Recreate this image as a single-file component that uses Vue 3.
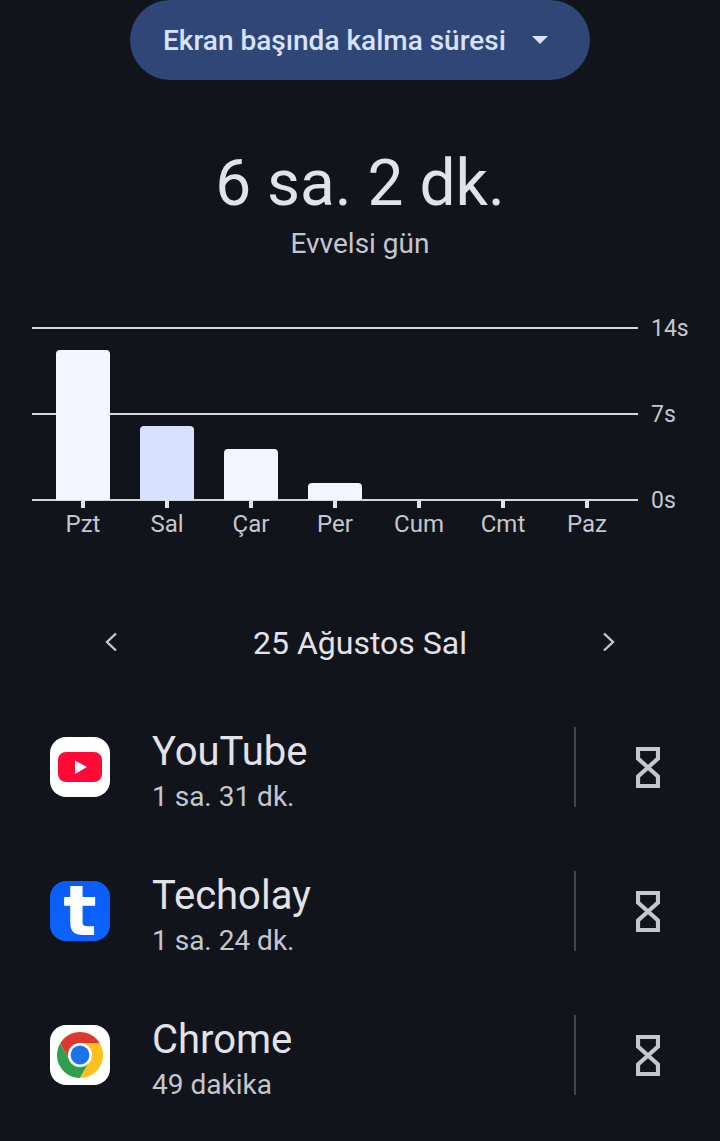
<template>
  <div class="screen">
    <div class="header">
      <button class="picker">
        <span>Ekran başında kalma süresi</span>
        <i class="caret"></i>
      </button>
    </div>

    <div class="total">6 sa. 2 dk.</div>
    <div class="period">Evvelsi gün</div>

    <div class="chart">
      <div class="plot">
        <div class="lines">
          <div class="line"></div>
          <div class="line"></div>
          <div class="line"></div>
        </div>
        <div class="bars">
          <div class="slot" v-for="d in days" :key="d.name">
            <div v-if="d.h" class="bar" :class="{ selected: d.selected }" :style="{ height: d.h + 'px' }"></div>
          </div>
        </div>
      </div>
      <div class="axis">
        <span>14s</span>
        <span>7s</span>
        <span>0s</span>
      </div>
      <div class="labels">
        <div class="day" v-for="d in days" :key="d.name">
          <i class="tick"></i>
          <span>{{ d.name }}</span>
        </div>
      </div>
    </div>

    <div class="date-nav">
      <svg width="14" height="20" viewBox="0 0 14 20"><path d="M12 1.500 3 10l9 8.500" fill="none" stroke="#c4c6d0" stroke-width="2.400"/></svg>
      <span class="date">25 Ağustos Sal</span>
      <svg width="14" height="20" viewBox="0 0 14 20"><path d="M2 1.500 11 10l-9 8.500" fill="none" stroke="#c4c6d0" stroke-width="2.400"/></svg>
    </div>

    <div class="apps">
      <div class="app" v-for="a in apps" :key="a.name">
        <div class="tile" :class="a.icon">
          <svg v-if="a.icon === 'youtube'" width="44" height="30" viewBox="0 0 44 30">
            <rect width="44" height="30" rx="8" fill="#ff0a37"/>
            <path d="M17 8.500 29 15 17 22z" fill="#fff"/>
          </svg>
          <span v-else-if="a.icon === 'techolay'" class="t-mark">t</span>
          <svg v-else width="46" height="46" viewBox="2 2 44 44">
            <path d="M4.950 13A22 22 0 0 1 43.050 13H24A11 11 0 0 0 14.470 29.500Z" fill="#d93a2d"/>
            <path d="M4.950 13 14.470 29.500A11 11 0 0 0 33.530 29.500L24 46A22 22 0 0 1 4.950 13Z" fill="#2f9e4f"/>
            <path d="M43.050 13A22 22 0 0 1 24 46L33.530 29.500A11 11 0 0 0 24 13Z" fill="#fcc11c"/>
            <circle cx="24" cy="24" r="11.500" fill="#fff"/>
            <circle cx="24" cy="24" r="9" fill="#1a73e8"/>
          </svg>
        </div>
        <div class="info">
          <div class="name">{{ a.name }}</div>
          <div class="time">{{ a.time }}</div>
        </div>
        <div class="divider"></div>
        <svg class="timer" width="24" height="41" viewBox="0 0 24 41">
          <path d="M2 2H22V11.500L2 29.500V39H22V29.500L2 11.500Z" fill="none" stroke="#c4c6d0" stroke-width="4.200"/>
        </svg>
      </div>
    </div>
  </div>
</template>

<script setup>
const days = [
  { name: 'Pzt', h: 150 },
  { name: 'Sal', h: 74, selected: true },
  { name: 'Çar', h: 51 },
  { name: 'Per', h: 17 },
  { name: 'Cum', h: 0 },
  { name: 'Cmt', h: 0 },
  { name: 'Paz', h: 0 }
]

const apps = [
  { name: 'YouTube', time: '1 sa. 31 dk.', icon: 'youtube' },
  { name: 'Techolay', time: '1 sa. 24 dk.', icon: 'techolay' },
  { name: 'Chrome', time: '49 dakika', icon: 'chrome' }
]
</script>

<style>
body {
  background: #11141b;
}
</style>

<style scoped>
.screen {
  min-height: 1141px;
  background: #11141b;
  font-family: Roboto, sans-serif;
  color: #e2e2e9;
  text-align: center;
  overflow: hidden;
}

.header {
  display: flex;
  justify-content: center;
}

.picker {
  display: flex;
  align-items: center;
  width: 460px;
  height: 80px;
  padding: 0 42px 0 33px;
  justify-content: space-between;
  border: none;
  border-radius: 40px;
  background: #2f4676;
  color: #d8e2ff;
  font-family: Roboto, sans-serif;
  font-size: 28px;
  font-weight: 500;
}

.caret {
  width: 0;
  height: 0;
  border-left: 8px solid transparent;
  border-right: 8px solid transparent;
  border-top: 8px solid #d8e2ff;
}

.total {
  margin-top: 68px;
  font-size: 64px;
  line-height: 72px;
}

.period {
  margin-top: 8px;
  font-size: 28px;
  line-height: 32px;
  color: #c4c6d0;
}

.chart {
  display: grid;
  grid-template-columns: 606px 1fr;
  margin: 67px 0 0 32px;
}

.plot {
  position: relative;
  height: 174px;
}

.lines {
  position: absolute;
  inset: 0;
  display: flex;
  flex-direction: column;
  justify-content: space-between;
}

.line {
  height: 2px;
  background: #d6d6da;
}

.bars {
  position: relative;
  display: grid;
  grid-template-columns: repeat(7, 84px);
  height: 173px;
  padding-left: 9px;
}

.slot {
  display: flex;
  align-items: flex-end;
  justify-content: center;
}

.bar {
  width: 54px;
  border-radius: 4px 4px 0 0;
  background: #f3f6ff;
}

.bar.selected {
  background: #d8e2ff;
}

.axis {
  display: flex;
  flex-direction: column;
  justify-content: space-between;
  height: 174px;
  padding-left: 13px;
  text-align: left;
  font-size: 23px;
  color: #c4c6d0;
}

.axis span {
  height: 2px;
  line-height: 4px;
}

.labels {
  display: grid;
  grid-template-columns: repeat(7, 84px);
  padding-left: 9px;
}

.day {
  display: flex;
  flex-direction: column;
  align-items: center;
  font-size: 24px;
  line-height: 28px;
  color: #c4c6d0;
}

.tick {
  width: 4px;
  height: 7px;
  margin-bottom: 2px;
  background: #e2e2e9;
}

.date-nav {
  display: flex;
  align-items: center;
  justify-content: space-between;
  height: 40px;
  margin-top: 84px;
  padding: 0 104px;
  font-size: 32px;
}

.date {
  padding-top: 2px;
}

.apps {
  display: flex;
  flex-direction: column;
  gap: 64px;
  margin-top: 65px;
  padding-left: 50px;
}

.app {
  display: flex;
  align-items: center;
  height: 80px;
  text-align: left;
}

.tile {
  display: flex;
  align-items: center;
  justify-content: center;
  width: 60px;
  height: 60px;
  border-radius: 16px;
  background: #fff;
}

.tile.techolay {
  background: linear-gradient(#0a5cf8, #0d63ff);
}

.t-mark {
  color: #fff;
  font-family: "DejaVu Sans", sans-serif;
  font-size: 70px;
  font-weight: 700;
  line-height: 60px;
}

.info {
  align-self: flex-start;
  width: 422px;
  margin-left: 42px;
  padding-top: 3px;
}

.name {
  font-size: 40px;
  line-height: 44px;
}

.time {
  margin-top: 7px;
  font-size: 28px;
  line-height: 32px;
  color: #c4c6d0;
}

.divider {
  width: 2px;
  height: 80px;
  background: #44464f;
}

.timer {
  margin-left: 60px;
}
</style>
